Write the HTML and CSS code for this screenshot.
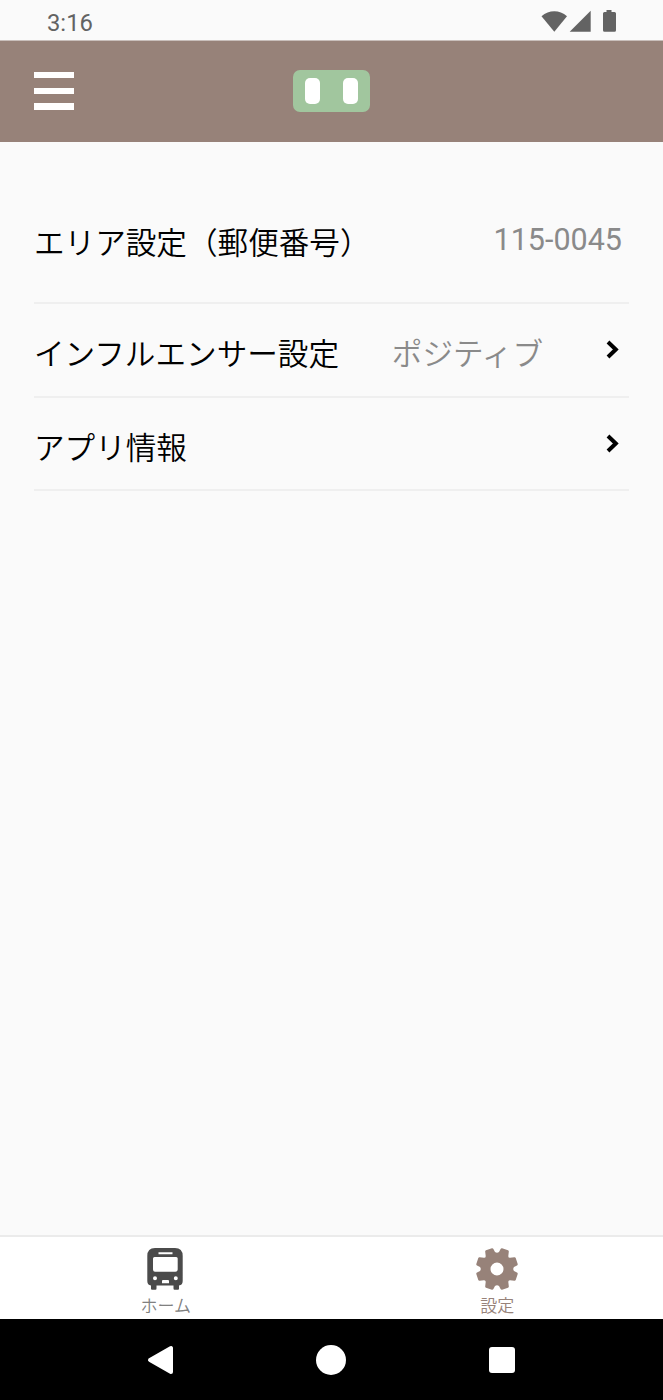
FILE: index.html
```html
<!DOCTYPE html>
<html lang="ja">
<head>
<meta charset="UTF-8">
<meta name="viewport" content="width=device-width, initial-scale=1.0">
<title>設定</title>
<link rel="stylesheet" href="styles.css">
</head>
<body>

<div class="status-bar">
  <span class="clock">3:16</span>
  <svg class="status-icons" width="76" height="24" viewBox="0 0 76 24">
    <path d="M1.500 5.300C9 -1.300 19.500 -1.300 27 5.300L14.300 20.700Z"/>
    <path d="M50.700 -.300V20.700H29.700Z"/>
    <path d="M66.500 -1h5v2h3a1.500 1.500 0 0 1 1.500 1.500V19.200a1.500 1.500 0 0 1-1.500 1.500h-10a1.500 1.500 0 0 1-1.500-1.500V2.500a1.500 1.500 0 0 1 1.500-1.500h2z"/>
  </svg>
</div>

<header class="header">
  <div class="menu">
    <span></span>
    <span></span>
    <span></span>
  </div>
  <div class="logo">
    <span></span>
    <span></span>
  </div>
</header>

<main class="settings">
  <div class="row row-area">
    <span class="label">エリア設定（郵便番号）</span>
    <span class="zip">115-0045</span>
  </div>
  <div class="row row-influencer">
    <span class="label">インフルエンサー設定</span>
    <span class="value">ポジティブ</span>
    <svg class="chevron" width="14" height="20" viewBox="0 0 14 20"><path d="M2 2L9.800 9.500L2 17"/></svg>
  </div>
  <div class="row row-info">
    <span class="label">アプリ情報</span>
    <svg class="chevron" width="14" height="20" viewBox="0 0 14 20"><path d="M2 2L9.800 9.500L2 17"/></svg>
  </div>
</main>

<nav class="tabs">
  <div class="tab">
    <svg width="44" height="44" viewBox="0 0 44 44">
      <path fill="#4b4b4b" fill-rule="evenodd" d="M12 1H32Q39.700 1 39.700 9V34Q39.700 38 36 38.500V41.500Q36 42.700 35 42.700H31.500Q30.500 42.700 30.500 41.500V38.500H13.500V41.500Q13.500 42.700 12.500 42.700H9Q8 42.700 8 41.500V38.500Q4.300 38 4.300 34V9Q4.300 1 12 1ZM15.500 5.300V7.300H29.500V5.300ZM11.500 10Q10 10 10 11.500V22.500Q10 24.700 12 24.700H32.500Q34.700 24.700 34.700 22.500V11.500Q34.700 10 33.200 10ZM12 29.300a2 2 0 1 0 0 4a2 2 0 1 0 0-4ZM32.800 29.300a2 2 0 1 0 0 4a2 2 0 1 0 0-4ZM20 33Q19 33 19 34V36.300H26V34Q26 33 25 33Z"/>
    </svg>
    <span>ホーム</span>
  </div>
  <div class="tab active">
    <svg width="44" height="44" viewBox="0 0 44 44">
      <g transform="translate(22 22)" fill="#978279">
        <path fill-rule="evenodd" d="M2 -17L3.600 -20Q4.100 -20.900 5.100 -20.700L11 -18.700Q12 -18.300 11.800 -17.300L11.300 -13Q11.200 -11.200 13 -11.300L17.300 -11.800Q18.300 -12 18.700 -11L20.700 -5.100Q20.900 -4.100 20 -3.600L17 -2Q15.500 0 17 2L20 3.600Q20.900 4.100 20.700 5.100L18.700 11Q18.300 12 17.300 11.800L13 11.300Q11.200 11.200 11.300 13L11.800 17.300Q12 18.300 11 18.700L5.100 20.700Q4.100 20.900 3.600 20L2 17Q0 15.500 -2 17L-3.600 20Q-4.100 20.900 -5.100 20.700L-11 18.700Q-12 18.300 -11.800 17.300L-11.300 13Q-11.200 11.200 -13 11.300L-17.300 11.800Q-18.300 12 -18.700 11L-20.700 5.100Q-20.900 4.100 -20 3.600L-17 2Q-15.500 0 -17 -2L-20 -3.600Q-20.900 -4.100 -20.700 -5.100L-18.700 -11Q-18.300 -12 -17.300 -11.800L-13 -11.300Q-11.200 -11.200 -11.300 -13L-11.800 -17.300Q-12 -18.300 -11 -18.700L-5.100 -20.700Q-4.100 -20.900 -3.600 -20L-2 -17Q0 -15.500 2 -17ZM0 -6.500a6.500 6.500 0 1 0 0 13a6.500 6.500 0 1 0 0-13Z"/>
      </g>
    </svg>
    <span>設定</span>
  </div>
</nav>

<div class="system-nav">
  <svg width="30" height="32" viewBox="0 0 30 32"><path d="M4 16L25 4V28Z" fill="#fff" stroke="#fff" stroke-width="4" stroke-linejoin="round"/></svg>
  <div class="nav-home"></div>
  <div class="nav-recent"></div>
</div>

</body>
</html>
```
FILE: styles.css
```css
* {
  box-sizing: border-box;
}
body {
  margin: 0;
  height: 1400px;
  display: flex;
  flex-direction: column;
  background: #fafafa;
  font-family: Roboto, "Noto Sans CJK JP", sans-serif;
}
.status-bar {
  display: flex;
  justify-content: space-between;
  height: 41px;
  padding: 9px 47px 0;
  border-bottom: 1px solid #c9bfbb;
  color: #636363;
}
.clock {
  font-size: 23.8px;
  line-height: 28px;
}
.status-icons {
  margin-top: 2px;
  overflow: visible;
  fill: #636363;
}
.header {
  display: flex;
  align-items: center;
  height: 101px;
  padding: 0 0 1.5px 34px;
  background: #978279;
}
.menu {
  display: flex;
  flex-direction: column;
  gap: 9.5px;
  width: 40.3px;
}
.menu span {
  height: 6.3px;
  background: #fff;
}
.logo {
  display: flex;
  justify-content: space-between;
  width: 76.5px;
  height: 42.5px;
  margin-left: 219px;
  padding: 8px 11.5px;
  border-radius: 7px;
  background: #a1c69e;
}
.logo span {
  width: 15.5px;
  height: 26px;
  border-radius: 5px;
  background: #fff;
}
.settings {
  flex: 1;
  padding: 46px 34px 0;
}
.row {
  display: flex;
  align-items: flex-start;
  height: 94px;
  padding-top: 30px;
  border-bottom: 2px solid #efefef;
  font-size: 30.6px;
  line-height: 36px;
}
.row-area {
  height: 116px;
  padding-top: 35px;
}
.row-info {
  height: 93px;
}
.label {
  flex: 1;
  font-family: "Noto Sans CJK JP", sans-serif;
  font-weight: 350;
  color: #000;
}
.zip {
  margin: -1px 7px 0 0;
  font-size: 30.5px;
  color: #8a8a8a;
}
.value {
  margin-right: 63px;
  font-family: "Noto Sans CJK JP", sans-serif;
  font-weight: 350;
  color: #8a8a8a;
}
.chevron {
  margin: 6px 9px 0 0;
  fill: none;
  stroke: #000;
  stroke-width: 4;
}
.tabs {
  display: flex;
  height: 84px;
  border-top: 2px solid #ebebeb;
  background: #fff;
}
.tab {
  flex: 1;
  display: flex;
  flex-direction: column;
  align-items: center;
  padding-top: 10px;
  font-family: "Noto Sans CJK JP", sans-serif;
  font-size: 17px;
  font-weight: 350;
  line-height: 24px;
  color: #808080;
}
.tab.active {
  color: #978279;
}
.tab svg {
  margin-right: 1.5px;
}
.tab span {
  margin-top: 2px;
}
.system-nav {
  display: flex;
  align-items: center;
  height: 81px;
  padding-left: 146px;
  background: #000;
}
.nav-home {
  width: 30px;
  height: 30px;
  margin-left: 140px;
  border-radius: 50%;
  background: #fff;
}
.nav-recent {
  width: 26px;
  height: 26px;
  margin-left: 143px;
  border-radius: 3px;
  background: #fff;
}
```
